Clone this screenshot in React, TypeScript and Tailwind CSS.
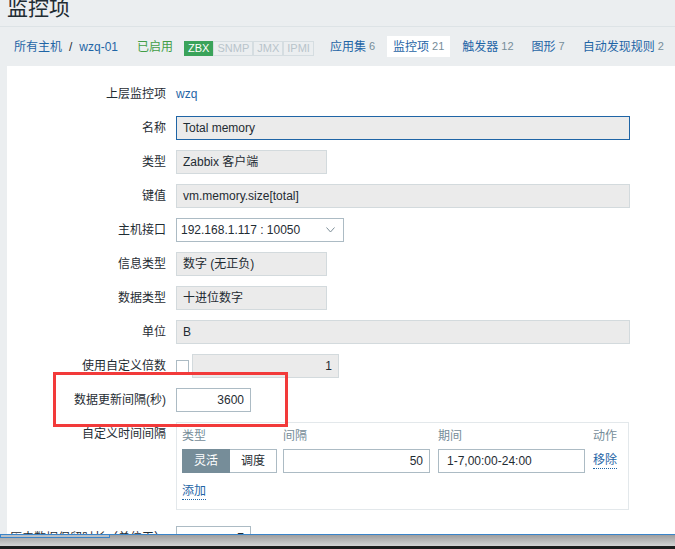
import { ReactNode } from "react";

const inputBase =
	"h-[24px] border px-[6px] text-[12px] leading-[22px] text-[#1f2c33]";

function Row({
	label,
	children,
	className,
}: {
	label: string;
	children: ReactNode;
	className?: string;
}) {
	return (
		<div className={`flex items-start ${className ?? ""}`}>
			<div className="w-[159px] shrink-0 whitespace-nowrap text-right leading-[24px]">
				{label}
			</div>
			<div className="ml-[10px] flex items-center">{children}</div>
		</div>
	);
}

function Tab({
	label,
	count,
	active,
}: {
	label: string;
	count: number;
	active?: boolean;
}) {
	return (
		<div
			className={`flex h-[21px] shrink-0 items-center whitespace-nowrap px-[6px] ${
				active ? "bg-white" : ""
			}`}
		>
			<span className="text-[#1f65a6]">{label}</span>
			<span className="ml-[3px] text-[11px] text-[#768d99]">{count}</span>
		</div>
	);
}

export default function App() {
	return (
		<div className="relative h-[549px] w-[675px] overflow-hidden bg-[#ebeef0] font-['Liberation_Sans','Noto_Sans_CJK_SC',sans-serif] text-[12px] text-[#1f2c33]">
			{/* Title */}
			<div className="flex h-[27px] items-start border-b border-[#dde3e6] px-[7px]">
				<h1 className="-mt-[4px] text-[21px] leading-[24px] text-[#1f2c33]">
					监控项
				</h1>
			</div>

			{/* Host nav */}
			<div className="flex h-[39px] items-center whitespace-nowrap pl-[14px]">
				<span className="shrink-0 text-[#1f65a6]">所有主机</span>
				<span className="mx-[7px] shrink-0">/</span>
				<span className="shrink-0 text-[#1f65a6]">wzq-01</span>
				<span className="ml-[19px] shrink-0 text-[#429e47]">已启用</span>
				<div className="ml-[11px] mt-[3px] flex shrink-0 text-[11px] leading-[13px]">
					<span className="border border-[#3aa35a] bg-[#3aa35a] px-[3px] text-white">
						ZBX
					</span>
					<span className="border border-[#d5dde1] bg-[#ebeef0] px-[3px] text-[#b8c4cb]">
						SNMP
					</span>
					<span className="border border-[#d5dde1] bg-[#ebeef0] px-[3px] text-[#b8c4cb]">
						JMX
					</span>
					<span className="border border-[#d5dde1] bg-[#ebeef0] px-[3px] text-[#b8c4cb]">
						IPMI
					</span>
				</div>
				<div className="ml-[10px] flex shrink-0 gap-[6px]">
					<Tab label="应用集" count={6} />
					<Tab label="监控项" count={21} active />
					<Tab label="触发器" count={12} />
					<Tab label="图形" count={7} />
					<Tab label="自动发现规则" count={2} />
				</div>
			</div>

			{/* Form */}
			<div className="ml-[7px] flex flex-col gap-[10px] bg-white pb-[40px] pt-[16px]">
				<Row label="上层监控项">
					<span className="leading-[24px] text-[#1f65a6]">wzq</span>
				</Row>
				<Row label="名称">
					<div
						className={`${inputBase} w-[454px] border-[#1f65a6] bg-[#ebebeb]`}
					>
						Total memory
					</div>
				</Row>
				<Row label="类型">
					<div
						className={`${inputBase} w-[151px] border-[#d3dadd] bg-[#ebebeb]`}
					>
						Zabbix 客户端
					</div>
				</Row>
				<Row label="键值">
					<div
						className={`${inputBase} w-[454px] border-[#d3dadd] bg-[#ebebeb]`}
					>
						vm.memory.size[total]
					</div>
				</Row>
				<Row label="主机接口">
					<div
						className={`${inputBase} flex w-[168px] items-center justify-between border-[#acbbc4] bg-white pl-[4px] pr-[8px]`}
					>
						<span>192.168.1.117 : 10050</span>
						<svg width="9" height="6" viewBox="0 0 9 6" fill="none">
							<path
								d="M0.5 0.5 L4.5 5 L8.5 0.5"
								stroke="#7d8e98"
								strokeWidth="1"
							/>
						</svg>
					</div>
				</Row>
				<Row label="信息类型">
					<div
						className={`${inputBase} w-[151px] border-[#d3dadd] bg-[#ebebeb]`}
					>
						数字 (无正负)
					</div>
				</Row>
				<Row label="数据类型">
					<div
						className={`${inputBase} w-[151px] border-[#d3dadd] bg-[#ebebeb]`}
					>
						十进位数字
					</div>
				</Row>
				<Row label="单位">
					<div
						className={`${inputBase} w-[454px] border-[#d3dadd] bg-[#ebebeb]`}
					>
						B
					</div>
				</Row>
				<Row label="使用自定义倍数">
					<div className="h-[13px] w-[13px] border border-[#acbbc4] bg-white" />
					<div
						className={`${inputBase} ml-[3px] w-[147px] border-[#d3dadd] bg-[#ebebeb] text-right`}
					>
						1
					</div>
				</Row>
				<Row label="数据更新间隔(秒)">
					<div
						className={`${inputBase} w-[75px] border-[#acbbc4] bg-white text-right`}
					>
						3600
					</div>
				</Row>
				<Row label="自定义时间间隔">
					<div className="w-[453px] border border-[#e3e8eb] px-[5px] pb-[9px] pt-[5px]">
						<div className="grid grid-cols-[101px_155px_155px_auto] leading-[16px] text-[#768d99]">
							<span>类型</span>
							<span>间隔</span>
							<span>期间</span>
							<span>动作</span>
						</div>
						<div className="mt-[5px] grid grid-cols-[101px_155px_155px_auto] items-center">
							<div className="flex h-[24px] w-[95px]">
								<span className="flex w-[48px] items-center justify-center border border-[#768d99] bg-[#768d99] text-white">
									灵活
								</span>
								<span className="flex w-[47px] items-center justify-center border border-l-0 border-[#acbbc4] bg-white">
									调度
								</span>
							</div>
							<div
								className={`${inputBase} w-[147px] border-[#acbbc4] bg-white text-right`}
							>
								50
							</div>
							<div
								className={`${inputBase} w-[147px] border-[#acbbc4] bg-white pl-[8px]`}
							>
								1-7,00:00-24:00
							</div>
							<span className="w-fit border-b border-dotted border-[#1f65a6] leading-[15px] text-[#1f65a6]">
								移除
							</span>
						</div>
						<span className="mt-[11px] inline-block border-b border-dotted border-[#1f65a6] leading-[15px] text-[#1f65a6]">
							添加
						</span>
					</div>
				</Row>
				<Row label="历史数据保留时长（单位天）" className="mt-[6px]">
					<div
						className={`${inputBase} w-[75px] border-[#acbbc4] bg-white text-right`}
					>
						7
					</div>
				</Row>
			</div>

			{/* Highlight annotation */}
			<div className="absolute left-[53px] top-[372px] h-[55px] w-[235px] border-[3px] border-[#f23a3a]" />

			{/* Window bottom edge */}
			<div className="absolute bottom-0 left-0 right-0 flex h-[15px] flex-col">
				<div className="relative h-[1px] bg-[#3a84c9]">
					<div className="absolute left-0 top-0 h-[4px] w-[110px] border border-[#3a84c9] bg-[#b9c0c7]" />
				</div>
				<div className="h-[11px] bg-gradient-to-b from-[#9e9e9e] to-[#d4d4d4]" />
				<div className="h-[3px] bg-[#1c1c1c]" />
			</div>
		</div>
	);
}
